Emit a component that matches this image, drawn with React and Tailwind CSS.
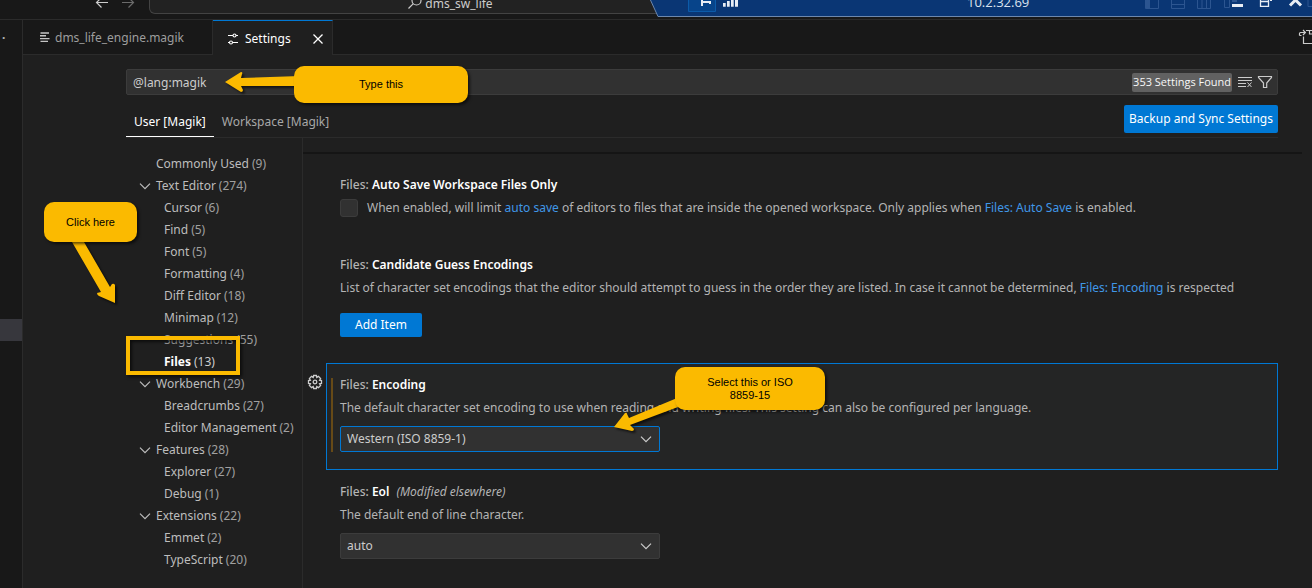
import React from "react";

const toc = [
  { label: "Commonly Used", count: 9, level: 0 },
  { label: "Text Editor", count: 274, level: 0, open: true },
  { label: "Cursor", count: 6, level: 1 },
  { label: "Find", count: 5, level: 1 },
  { label: "Font", count: 5, level: 1 },
  { label: "Formatting", count: 4, level: 1 },
  { label: "Diff Editor", count: 18, level: 1 },
  { label: "Minimap", count: 12, level: 1 },
  { label: "Suggestions", count: 55, level: 1, dim: true },
  { label: "Files", count: 13, level: 1, selected: true },
  { label: "Workbench", count: 29, level: 0, open: true },
  { label: "Breadcrumbs", count: 27, level: 1 },
  { label: "Editor Management", count: 2, level: 1 },
  { label: "Features", count: 28, level: 0, open: true },
  { label: "Explorer", count: 27, level: 1 },
  { label: "Debug", count: 1, level: 1 },
  { label: "Extensions", count: 22, level: 0, open: true },
  { label: "Emmet", count: 2, level: 1 },
  { label: "TypeScript", count: 20, level: 1 },
];

function Chevron({ className = "" }) {
  return (
    <svg viewBox="0 0 16 16" className={"size-4 shrink-0 " + className} fill="none" stroke="currentColor" strokeWidth="1.2" aria-hidden="true">
      <path d="M3 5.7 L8 10.7 L13 5.7" />
    </svg>
  );
}

function TitleBar() {
  return (
    <header className="relative flex h-5 shrink-0 items-start overflow-hidden border-b border-[#2b2b2b] bg-[#181818]">
      <button type="button" aria-label="Go back" className="ml-[94px] h-4 w-4 text-[#cccccc]">
        <svg viewBox="0 0 16 16" className="size-4" fill="none" stroke="currentColor" strokeWidth="1.2"><path d="M14 2.5H2.5M7.5 -2.5L2.5 2.5L7.5 7.5" /></svg>
      </button>
      <button type="button" aria-label="Go forward" className="ml-[10px] h-4 w-4 text-[#6b6b6b]">
        <svg viewBox="0 0 16 16" className="size-4" fill="none" stroke="currentColor" strokeWidth="1.2"><path d="M2 2.5H13.5M8.5 -2.5L13.5 2.5L8.5 7.5" /></svg>
      </button>
      <button type="button" className="ml-[13px] flex h-[14px] w-[602px] items-end justify-center gap-0.5 rounded-b-md border border-t-0 border-[#434343] bg-[#222222] text-xs leading-[18px] text-[#cccccc]">
        <svg viewBox="0 0 16 16" className="size-4" fill="none" stroke="currentColor" strokeWidth="1.2"><circle cx="9.5" cy="3.500" r="4.500" /><path d="M6.300 6.700L1.500 11.500" /></svg>
        <span>dms_sw_life</span>
      </button>
    </header>
  );
}

function RemoteBar() {
  return (
    <div className="absolute top-0 right-0 left-[650px] h-[18px] overflow-hidden text-white">
      <svg className="absolute inset-0 h-full w-full" aria-hidden="true">
        <path d="M0 -1 L8 16.5 H1400 V-2 H0 Z" fill="#0a3674" stroke="#6d88ad" strokeWidth="1" />
      </svg>
      <div className="relative flex h-3 items-start">
        <svg viewBox="0 0 64 12" className="ml-[38px] h-3 w-16 shrink-0" aria-hidden="true">
          <path d="M0.5 -1 V11.5 H27.5 V-1" fill="#07448a" stroke="#0c5ba9" />
          <path d="M13 0H15V6H13Z M13 1H23V3H13Z M21 1H23V4H21Z" fill="#e8edf4" />
          <path d="M35 3h2.700v3.700h-2.700zM39 1h2.700v5.700h-2.700zM43 0h2.700v6.700h-2.700zM47 0h3v6.700h-3z" fill="#e8edf4" />
        </svg>
        <span className="-mt-1.5 ml-[215px] font-['Open_Sans',sans-serif] text-[13px] leading-4 text-[#dbe3ee]">10.2.32.69</span>
        <svg viewBox="0 0 170 12" className="ml-auto h-3 w-[170px] shrink-0" fill="none" aria-hidden="true">
          <g stroke="#2c5590"><path d="M3.500-1V8.500H16.500V-1M29.500-1V8.500H42.500V-1M29.500 4.500H42.500M55.500-1V8.500H68.500V-1M60 0V8M64.500 0V8M82.500-1V7.500H87.500V-1M166 -1V6.500H171" /><path d="M4 0H8V8H4Z M90 0H95V2H90Z" fill="#2c5590" stroke="none" /></g>
          <path d="M90 4H101V7H90Z" fill="#e8edf4" />
          <path d="M118.500 0V6.300H126.500V0M118 1.500H127" stroke="#e8edf4" strokeWidth="1.300" />
          <path d="M128 0H130V1H128Z" fill="#e8edf4" />
          <path d="M148 5.500L153.500 0L159 5.500" stroke="#e8edf4" strokeWidth="3" />
        </svg>
      </div>
    </div>
  );
}

function Tabs() {
  return (
    <nav aria-label="Open editors" className="flex h-[35px] shrink-0 bg-[#181818]">
      <button type="button" className="flex w-[190px] items-center gap-1 border-r border-b border-[#2b2b2b] pt-0.5 pl-4 text-[#9d9d9d]">
        <svg viewBox="0 0 12 12" className="size-3 shrink-0" stroke="#c5c5c5" strokeWidth="1.400" aria-hidden="true"><path d="M1.500 1H10M1 3.800H7M1 6.600H10.500M1.500 9.400H9" /></svg>
        <span>dms_life_engine.magik</span>
      </button>
      <div className="flex w-[120px] items-center border-t border-r border-t-[#0078d4] border-r-[#2b2b2b] bg-[#1f1f1f] pt-0.5 text-white">
        <svg viewBox="0 0 16 16" className="ml-3 size-4 shrink-0" fill="none" stroke="currentColor" strokeWidth="1.1" aria-hidden="true">
          <path d="M3 4.500H8M11 4.500H13M3 11.500H4.500M8 11.500H13" /><circle cx="9.500" cy="4.500" r="1.500" /><circle cx="6" cy="11.500" r="1.500" />
        </svg>
        <span className="ml-1">Settings</span>
        <button type="button" aria-label="Close Settings" className="mr-1 ml-auto flex size-5 items-center justify-center">
          <svg viewBox="0 0 16 16" className="size-4" stroke="currentColor" strokeWidth="1.3"><path d="M3.500 3.500L12.500 12.500M12.500 3.500L3.500 12.500" /></svg>
        </button>
      </div>
      <div className="flex flex-1 items-center justify-end overflow-hidden border-b border-[#2b2b2b]">
        <svg viewBox="0 0 14 16" className="h-4 w-[14px]" fill="none" stroke="#cccccc" strokeWidth="1.200" aria-label="Open Settings (JSON)" role="img">
          <path d="M5.500 7.500V14.500H14M8 1.500H14M1.500 6.500H3.500M1.500 6.500V4.500Q1.500 3.500 2.500 3.500H7M5 1L7.400 3.500L5 6M11.500 1.500V5H14" />
        </svg>
      </div>
    </nav>
  );
}

function TocItem({ item }) {
  const indent = item.level === 0 ? "pl-[11px]" : "pl-[38px]";
  return (
    <li>
      <a href="#settings" className={"flex h-[22px] items-center whitespace-nowrap " + indent + (item.selected ? " text-white" : item.dim ? " text-[#9d9d9d]" : " text-[#bdbdbd]")}>
        {item.level === 0 && <span className="mr-[3px] flex w-4">{item.open && <Chevron />}</span>}
        <span className={item.selected ? "font-bold" : ""}>{item.label}</span>
        <span className={"ml-[3px] " + (item.selected ? "text-[#cccccc]" : "text-[#a0a0a0]")}>({item.count})</span>
      </a>
    </li>
  );
}

function Title({ name, note }) {
  return (
    <h2 className="leading-[22px] text-[#b4b4b4]">
      <span className="font-medium">Files: </span>
      <span className="font-semibold text-white">{name}</span>
      {note && <i className="ml-[7px]">{note}</i>}
    </h2>
  );
}

function SelectBox({ id, label, options, focused }) {
  return (
    <div className="relative w-80">
      <select id={id} aria-label={label} className={"block h-[26px] w-full appearance-none rounded-xs border bg-[#313131] px-1.5 text-[#cccccc] outline-none " + (focused ? "border-[#0078d4]" : "border-[#3c3c3c]")}>
        {options.map((o) => <option key={o}>{o}</option>)}
      </select>
      <Chevron className="pointer-events-none absolute top-[5px] right-[6px] text-[#cccccc]" />
    </div>
  );
}

function Callout({ className, children }) {
  return (
    <div className={"absolute flex items-center justify-center rounded-[10px] bg-[#fbba00] text-center font-['Liberation_Sans',Arial,sans-serif] text-[11px] leading-[13px] text-black shadow-[2px_2px_3px_rgba(0,0,0,0.6)] " + className}>
      {children}
    </div>
  );
}

function Annotations() {
  return (
    <div className="pointer-events-none absolute inset-0">
      <svg className="absolute inset-0 h-full w-full drop-shadow-[2px_2px_1px_rgba(0,0,0,0.6)]" fill="#fbba00" aria-hidden="true">
        <path d="M225 82L241 72Q243 72 242 74L241 78L300 76V86L241 86L243 90Q243 92 241 92Z" />
        <path d="M72 242L101 292L97 293Q97 295 99 296L115 303V285Q114 283 112 284L110 287L84 242Z" />
        <path d="M614 427L625 413Q627 412 627 414L629 418L682 396L686 404L630 425L634 429Q634 431 632 431Z" />
      </svg>
      <div className="absolute top-[336px] left-[126px] h-[39px] w-[114px] border-4 border-[#fbba00] shadow-[2px_2px_3px_rgba(0,0,0,0.6),inset_2px_2px_3px_rgba(0,0,0,0.6)]" />
      <Callout className="top-[66px] left-[294px] h-[37px] w-[174px]">Type this</Callout>
      <Callout className="top-[202px] left-[44px] h-10 w-[93px]">Click here</Callout>
      <Callout className="top-[367px] left-[675px] h-[43px] w-[150px] px-6">Select this or ISO 8859-15</Callout>
    </div>
  );
}

export default function App() {
  return (
    <div className="relative flex h-screen flex-col overflow-hidden bg-[#1f1f1f] font-['Noto_Sans','Open_Sans',sans-serif] text-xs text-[#b4b4b4]">
      <TitleBar />
      <div className="flex min-h-0 flex-1">
        <aside className="flex w-[23px] shrink-0 flex-col border-r border-[#2b2b2b] bg-[#181818]">
          <span className="h-[299px] pt-[10px] pl-[2px] leading-4 font-bold">·</span>
          <span className="h-[22px] bg-[#37373d]" />
        </aside>
        <main className="flex min-w-0 flex-1 flex-col">
          <Tabs />
          <div className="mr-[34px] ml-[103px] flex min-h-0 flex-1 flex-col">
            <div className="mt-[14px] flex h-[26px] shrink-0 items-center rounded-xs border border-[#3c3c3c] bg-[#313131] pr-1">
              <input aria-label="Search settings" defaultValue="@lang:magik" className="h-full min-w-0 flex-1 bg-transparent px-1.5 text-[#cccccc] outline-none" />
              <span className="flex h-[19px] items-center rounded-xs bg-[#616161] px-px font-['Open_Sans',sans-serif] text-[11px] text-[#f8f8f8]">353 Settings Found</span>
              <button type="button" aria-label="Clear Settings Search Input" className="ml-[5px] text-[#cccccc]">
                <svg viewBox="0 0 16 16" className="size-4" fill="none" stroke="currentColor"><path d="M1 3.500H15M1 6.500H15M1 9.500H9M1 12.500H9M10.500 8.500L14.500 13M14.500 8.500L10.500 13" /></svg>
              </button>
              <button type="button" aria-label="Filter Settings" className="ml-1 text-[#cccccc]">
                <svg viewBox="0 0 16 16" className="size-4" fill="none" stroke="currentColor" strokeWidth="1.200"><path d="M1.500 2.500H14.500V3.500L9.700 9V13.500H6.500V9L1.500 3.500Z" /></svg>
              </button>
            </div>
            <div className="flex h-[43px] shrink-0 items-end justify-between border-b border-[#2b2b2b]">
              <div className="flex h-8 self-end">
                <button type="button" className="border-b border-white px-2 pt-0.5 text-white">User [Magik]</button>
                <button type="button" className="px-2 pt-px text-[#a8a8a8]">Workspace [Magik]</button>
              </div>
              <button type="button" className="mb-1 h-7 rounded-xs bg-[#0078d4] px-[5px] text-white">Backup and Sync Settings</button>
            </div>
            <div className="flex min-h-0 flex-1">
              <nav aria-label="Settings groups" className="w-[177px] shrink-0 border-r border-[#2b2b2b] pt-[15px]">
                <ul>{toc.map((item) => <TocItem key={item.label} item={item} />)}</ul>
              </nav>
              <div className="-mr-6 mt-[14px] min-w-0 flex-1 border-t-2 border-[#151515] pr-6 pl-[23px]">
                <section className="px-[14px] pt-5">
                  <Title name="Auto Save Workspace Files Only" />
                  <div className="mt-[3px] flex items-center gap-[9px]">
                    <input id="autosave" type="checkbox" className="size-[18px] shrink-0 appearance-none rounded-[3px] border border-[#3c3c3c] bg-[#313131]" />
                    <label htmlFor="autosave" className="leading-[18px]">
                      When enabled, will limit <a href="#autosave" className="text-[#4097e8]">auto save</a> of editors to files that are inside the opened workspace. Only applies when <a href="#autosave" className="text-[#4097e8]">Files: Auto Save</a> is enabled.
                    </label>
                  </div>
                </section>
                <section className="px-[14px] pt-[37px]">
                  <Title name="Candidate Guess Encodings" />
                  <p className="mt-[3px] leading-[18px] whitespace-nowrap">
                    List of character set encodings that the editor should attempt to guess in the order they are listed. In case it cannot be determined, <a href="#encoding" className="text-[#4097e8]">Files: Encoding</a> is respected
                  </p>
                  <button type="button" className="mt-4 h-6 rounded-xs bg-[#0078d4] px-[15px] text-white">Add Item</button>
                </section>
                <section className="relative mt-[26px] h-[107px] border border-[#0078d4] bg-[#242525] px-[13px] pt-[10px]">
                  <button type="button" aria-label="More Actions" className="absolute top-[10px] -left-5 text-[#cccccc]">
                    <svg viewBox="0 0 16 16" className="size-4" fill="none" stroke="currentColor" strokeWidth="1.300">
                      <path d="M6.600 1.500H9.400L9.800 3.400L11.500 2.400L13.600 4.500L12.600 6.200L14.500 6.600V9.400L12.600 9.800L13.600 11.500L11.500 13.600L9.800 12.600L9.400 14.500H6.600L6.200 12.600L4.500 13.600L2.400 11.500L3.400 9.800L1.500 9.400V6.600L3.400 6.200L2.400 4.500L4.500 2.400L6.200 3.400Z" /><circle cx="8" cy="8" r="1.800" />
                    </svg>
                  </button>
                  <span className="absolute top-[14px] left-1 h-[74px] w-0.5 bg-[#664a17]" />
                  <Title name="Encoding" />
                  <p className="mt-[3px] leading-[18px]">The default character set encoding to use when reading and writing files. This setting can also be configured per language.</p>
                  <div className="mt-[9px]"><SelectBox id="encoding" label="Files: Encoding" options={["Western (ISO 8859-1)", "Western (ISO 8859-15)"]} focused /></div>
                </section>
                <section className="px-[14px] pt-[11px]">
                  <Title name="Eol" note="(Modified elsewhere)" />
                  <p className="mt-[3px] leading-[18px]">The default end of line character.</p>
                  <div className="mt-[9px]"><SelectBox id="eol" label="Files: Eol" options={["auto", "\\n", "\\r\\n"]} /></div>
                </section>
              </div>
            </div>
          </div>
        </main>
      </div>
      <RemoteBar />
      <Annotations />
    </div>
  );
}
